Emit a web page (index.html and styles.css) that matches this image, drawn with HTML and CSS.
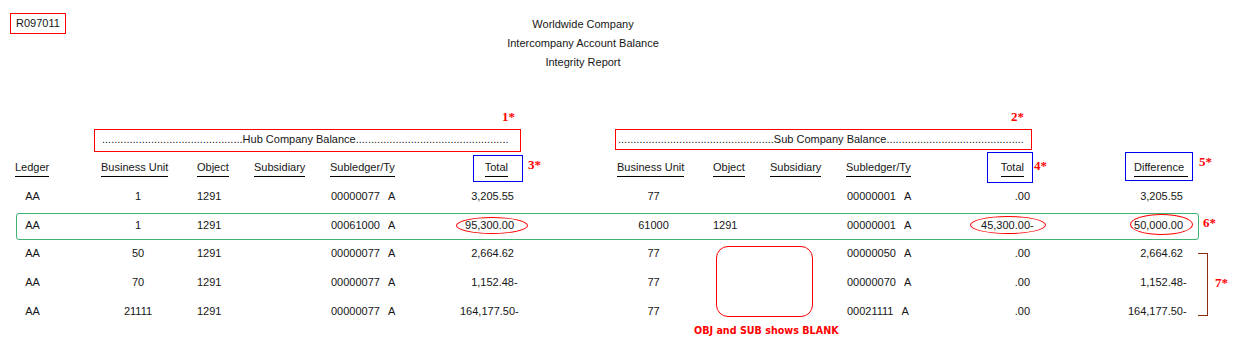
FILE: index.html
```html
<!DOCTYPE html>
<html>
<head>
<meta charset="utf-8">
<link rel="stylesheet" href="styles.css">
</head>
<body>
<div class="page">
  <header class="top">
    <div class="rid">R097011</div>
    <div class="titles">
      <div>Worldwide Company</div>
      <div>Intercompany Account Balance</div>
      <div>Integrity Report</div>
    </div>
  </header>

  <section class="groups">
    <div class="grp hub">..............................................Hub Company Balance..................................................</div>
    <div class="grp sub">...................................................Sub Company Balance.............................................</div>
  </section>

  <div class="cols hdr">
    <div class="ledger"><span class="h">Ledger</span></div>
    <div class="bu"><span class="h">Business Unit</span></div>
    <div class="obj"><span class="h">Object</span></div>
    <div class="sub"><span class="h">Subsidiary</span></div>
    <div class="sl"><span class="h">Subledger/Ty</span></div>
    <div class="tot"><span class="h">Total</span></div>
    <div class="bu2"><span class="h">Business Unit</span></div>
    <div class="obj2"><span class="h">Object</span></div>
    <div class="sub2"><span class="h">Subsidiary</span></div>
    <div class="sl2"><span class="h">Subledger/Ty</span></div>
    <div class="tot2"><span class="h">Total</span></div>
    <div class="diff"><span class="h hd">Difference</span></div>
  </div>

  <div class="rows">
    <div class="cols row">
      <div class="ledger">AA</div>
      <div class="bu">1</div>
      <div class="obj">1291</div>
      <div class="sl">00000077<span class="ty">A</span></div>
      <div class="tot">3,205.55<span class="neg"></span></div>
      <div class="bu2">77</div>
      <div class="sl2">00000001<span class="ty">A</span></div>
      <div class="tot2">.00<span class="neg"></span></div>
      <div class="diff">3,205.55<span class="neg"></span></div>
    </div>
    <div class="cols row hl">
      <div class="ledger">AA</div>
      <div class="bu">1</div>
      <div class="obj">1291</div>
      <div class="sl">00061000<span class="ty">A</span></div>
      <div class="tot">95,300.00<span class="neg"></span></div>
      <div class="bu2">61000</div>
      <div class="obj2">1291</div>
      <div class="sl2">00000001<span class="ty">A</span></div>
      <div class="tot2">45,300.00<span class="neg">-</span></div>
      <div class="diff">50,000.00<span class="neg"></span></div>
    </div>
    <div class="cols row">
      <div class="ledger">AA</div>
      <div class="bu">50</div>
      <div class="obj">1291</div>
      <div class="sl">00000077<span class="ty">A</span></div>
      <div class="tot">2,664.62<span class="neg"></span></div>
      <div class="bu2">77</div>
      <div class="sl2">00000050<span class="ty">A</span></div>
      <div class="tot2">.00<span class="neg"></span></div>
      <div class="diff">2,664.62<span class="neg"></span></div>
    </div>
    <div class="cols row">
      <div class="ledger">AA</div>
      <div class="bu">70</div>
      <div class="obj">1291</div>
      <div class="sl">00000077<span class="ty">A</span></div>
      <div class="tot">1,152.48<span class="neg">-</span></div>
      <div class="bu2">77</div>
      <div class="sl2">00000070<span class="ty">A</span></div>
      <div class="tot2">.00<span class="neg"></span></div>
      <div class="diff">1,152.48<span class="neg">-</span></div>
    </div>
    <div class="cols row">
      <div class="ledger">AA</div>
      <div class="bu">21111</div>
      <div class="obj">1291</div>
      <div class="sl">00000077<span class="ty">A</span></div>
      <div class="tot">164,177.50<span class="neg">-</span></div>
      <div class="bu2">77</div>
      <div class="sl2">00021111<span class="ty">A</span></div>
      <div class="tot2">.00<span class="neg"></span></div>
      <div class="diff">164,177.50<span class="neg">-</span></div>
    </div>
  </div>

  <!-- annotations -->
  <div class="mark m1">1*</div>
  <div class="mark m2">2*</div>
  <div class="mark m3">3*</div>
  <div class="mark m4">4*</div>
  <div class="mark m5">5*</div>
  <div class="mark m6">6*</div>
  <div class="mark m7">7*</div>
  <div class="bbox b1"></div>
  <div class="bbox b2"></div>
  <div class="bbox b3"></div>
  <div class="oval o1"></div>
  <div class="oval o2"></div>
  <div class="oval o3"></div>
  <div class="blank-box"></div>
  <div class="blank-note">OBJ and SUB shows BLANK</div>
  <div class="bracket"></div>
</div>
</body>
</html>
```
FILE: styles.css
```css
* { box-sizing: border-box; }
body {
  margin: 0;
  background: #fff;
  font-family: "Liberation Sans", Arial, sans-serif;
  font-size: 11px;
  color: #161616;
}
.page {
  position: relative;
  width: 1244px;
  height: 348px;
  overflow: hidden;
}
.top { display: grid; }
.top > * { grid-area: 1 / 1; }
.rid {
  justify-self: start;
  align-self: start;
  margin: 13px 0 0 10px;
  width: 56px;
  height: 21px;
  padding: 3px 0 0 5px;
  border: 1px solid #f00;
  line-height: 13px;
}
.titles {
  justify-self: start;
  width: 1166px;
  padding-top: 15px;
  text-align: center;
  line-height: 19px;
}
.groups {
  display: flex;
  align-items: flex-start;
  gap: 94px;
  margin-top: 57px;
  padding-left: 94px;
}
.grp {
  border: 1px solid #f00;
  padding-top: 3px;
  line-height: 13px;
  white-space: nowrap;
  overflow: hidden;
}
.grp.hub { width: 427px; height: 23px; padding-left: 7px; }
.grp.sub { width: 417px; height: 21px; padding-left: 2px; }

.cols {
  display: grid;
  grid-template-columns: 15px 35px 51px 71px 25px 57px 76px 130px 58px 99px 70px 26px 57px 76px 114px 74px 66px 88px;
}
.cols > * { grid-row: 1; white-space: nowrap; }
.ledger { grid-column: 2; text-align: center; }
.bu { grid-column: 4; text-align: center; }
.obj { grid-column: 6; }
.sub { grid-column: 7; }
.sl { grid-column: 8; }
.tot { grid-column: 9; text-align: right; }
.bu2 { grid-column: 11; text-align: center; }
.obj2 { grid-column: 13; }
.sub2 { grid-column: 14; }
.sl2 { grid-column: 15; }
.tot2 { grid-column: 16; text-align: right; }
.diff { grid-column: 18; text-align: right; }

.hdr {
  height: 30px;
  padding-top: 9px;
  line-height: 13px;
}
.hdr > * { text-align: left; }
.hdr .tot, .hdr .tot2 { text-align: right; padding-right: 10px; }
.hdr .diff { text-align: right; }
.h {
  display: inline-block;
  padding-bottom: 2px;
  border-bottom: 1px solid #000;
}
.h.hd { padding-right: 4px; }

.rows {
  display: flex;
  flex-direction: column;
  gap: 4px;
  padding-top: 2px;
}
.row {
  position: relative;
  height: 24.75px;
  align-items: center;
  line-height: 13px;
}
.row .bu, .row .bu2 { padding-left: 3px; }
.row .sl, .row .sl2 { padding-left: 1px; }
.row .diff { padding-right: 1px; }
.ty { margin-left: 8px; }
.neg {
  display: inline-block;
  width: 4px;
  text-align: left;
}
.row.hl::before {
  content: "";
  position: absolute;
  left: 16px;
  top: 0;
  width: 1181px;
  height: 100%;
  border: 1px solid #3cb371;
  border-radius: 3px;
}

/* annotations */
.mark {
  position: absolute;
  font: bold 13px/13px "Liberation Serif", "Times New Roman", serif;
  color: #f00;
}
.m1 { left: 502px; top: 110px; }
.m2 { left: 1011px; top: 110px; }
.m3 { left: 528px; top: 158px; }
.m4 { left: 1034px; top: 159px; }
.m5 { left: 1199px; top: 155px; }
.m6 { left: 1203px; top: 216px; }
.m7 { left: 1215px; top: 276px; }

.bbox { position: absolute; border: 1px solid #0000f0; }
.b1 { left: 473px; top: 155px; width: 50px; height: 27px; }
.b2 { left: 987px; top: 152px; width: 46px; height: 31px; }
.b3 { left: 1125px; top: 152px; width: 68px; height: 29px; }

.oval { position: absolute; border: 1px solid #f00; border-radius: 50%; }
.o1 { left: 456px; top: 217px; width: 72px; height: 17px; }
.o2 { left: 970px; top: 216px; width: 76px; height: 18px; }
.o3 { left: 1130px; top: 214px; width: 63px; height: 21px; }

.blank-box {
  position: absolute;
  left: 716px;
  top: 246px;
  width: 97px;
  height: 71px;
  border: 1px solid #f00;
  border-radius: 12px;
}
.blank-note {
  position: absolute;
  left: 694px;
  top: 325px;
  font: bold 9.6px/12px "DejaVu Sans", Verdana, sans-serif;
  color: #f00;
  white-space: nowrap;
}
.bracket {
  position: absolute;
  left: 1198px;
  top: 253px;
  width: 10px;
  height: 63px;
  border: 1px solid #8b2c0c;
  border-left: none;
}
```
